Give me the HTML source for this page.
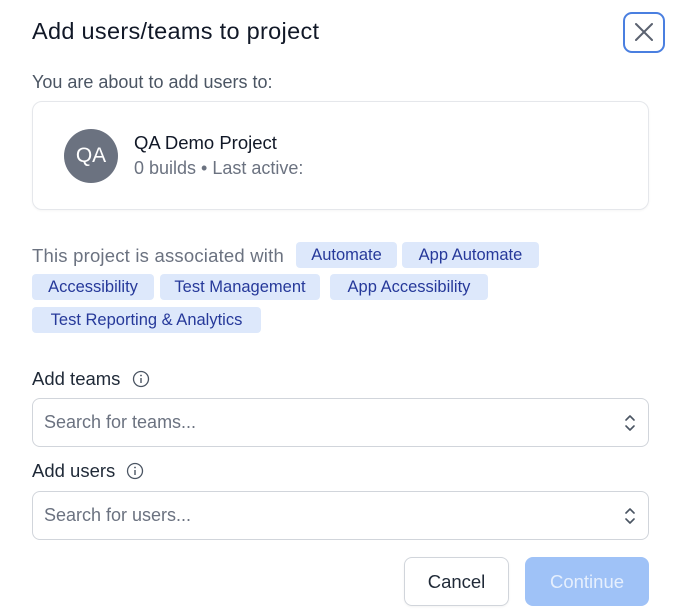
<!DOCTYPE html>
<html><head><style>
*{margin:0;padding:0;box-sizing:border-box}
body{width:680px;height:616px;background:#fff;font-family:"Liberation Sans",sans-serif;position:relative;overflow:hidden;color:#111827}
.a{position:absolute;white-space:nowrap}
.chip{position:absolute;height:26px;line-height:26px;background:#dde8fb;color:#26399a;font-size:16.5px;border-radius:4px;text-align:center}
.inp{position:absolute;left:32px;width:617px;height:49px;border:1px solid #d1d5db;border-radius:8px;font-size:18px;color:#6b7280;line-height:47px;padding-left:11px}
.chev{position:absolute;right:12px;top:14px}
</style></head><body>
<div class="a" style="left:32px;top:18px;font-size:23.5px;letter-spacing:0.3px;color:#111827">Add users/teams to project</div>
<div class="a" style="left:623px;top:12px;width:42px;height:41px;border:2px solid #4a7fe0;border-radius:9px">
<svg width="38" height="37" viewBox="0 0 38 37"><path d="M11 10L27 26M27 10L11 26" stroke="#5b6270" stroke-width="2" stroke-linecap="round"/></svg></div>
<div class="a" style="left:32px;top:72px;font-size:18px;color:#4b5563">You are about to add users to:</div>
<div class="a" style="left:32px;top:101px;width:617px;height:109px;border:1px solid #e5e7eb;border-radius:10px;box-shadow:0 1px 2px rgba(0,0,0,.04)"></div>
<div class="a" style="left:64px;top:129px;width:54px;height:54px;border-radius:50%;background:#6b7280;color:#fff;font-size:21px;line-height:54px;text-align:center">QA</div>
<div class="a" style="left:134px;top:132px;font-size:18.5px;color:#111827">QA Demo Project</div>
<div class="a" style="left:134px;top:158px;font-size:18px;color:#6b7280">0 builds • Last active:</div>
<div class="a" style="left:32px;top:245px;font-size:18.5px;letter-spacing:0.2px;color:#6b7280">This project is associated with</div>
<div class="chip" style="left:296px;top:242px;width:101px">Automate</div>
<div class="chip" style="left:402px;top:242px;width:137px">App Automate</div>
<div class="chip" style="left:32px;top:274px;width:122px">Accessibility</div>
<div class="chip" style="left:160px;top:274px;width:160px">Test Management</div>
<div class="chip" style="left:330px;top:274px;width:158px">App Accessibility</div>
<div class="chip" style="left:32px;top:307px;width:229px">Test Reporting &amp; Analytics</div>
<div class="a" style="left:32px;top:368px;font-size:18.5px;color:#1f2937">Add teams</div>
<svg class="a" style="left:132px;top:370px" width="18" height="18" viewBox="0 0 18 18"><circle cx="9" cy="9" r="7.5" fill="none" stroke="#4b5563" stroke-width="1.3"/><path d="M9 8v5" stroke="#4b5563" stroke-width="1.4"/><circle cx="9" cy="5.5" r="0.9" fill="#4b5563"/></svg>
<div class="inp" style="top:398px">Search for teams...<svg class="chev" width="12" height="20" viewBox="0 0 12 20"><path d="M2 7L6 3L10 7M2 13L6 17L10 13" fill="none" stroke="#4b5563" stroke-width="1.6" stroke-linecap="round" stroke-linejoin="round"/></svg></div>
<div class="a" style="left:32px;top:460px;font-size:18.5px;color:#1f2937">Add users</div>
<svg class="a" style="left:126px;top:462px" width="18" height="18" viewBox="0 0 18 18"><circle cx="9" cy="9" r="7.5" fill="none" stroke="#4b5563" stroke-width="1.3"/><path d="M9 8v5" stroke="#4b5563" stroke-width="1.4"/><circle cx="9" cy="5.5" r="0.9" fill="#4b5563"/></svg>
<div class="inp" style="top:491px">Search for users...<svg class="chev" width="12" height="20" viewBox="0 0 12 20"><path d="M2 7L6 3L10 7M2 13L6 17L10 13" fill="none" stroke="#4b5563" stroke-width="1.6" stroke-linecap="round" stroke-linejoin="round"/></svg></div>
<div class="a" style="left:404px;top:557px;width:105px;height:49px;border:1px solid #d1d5db;border-radius:8px;font-size:18.5px;line-height:47px;text-align:center;color:#1f2937;box-shadow:0 1px 2px rgba(0,0,0,.05)">Cancel</div>
<div class="a" style="left:525px;top:557px;width:124px;height:49px;background:#9fc2f7;border-radius:8px;font-size:18.5px;line-height:49px;text-align:center;color:#e6effd">Continue</div>
</body></html>
